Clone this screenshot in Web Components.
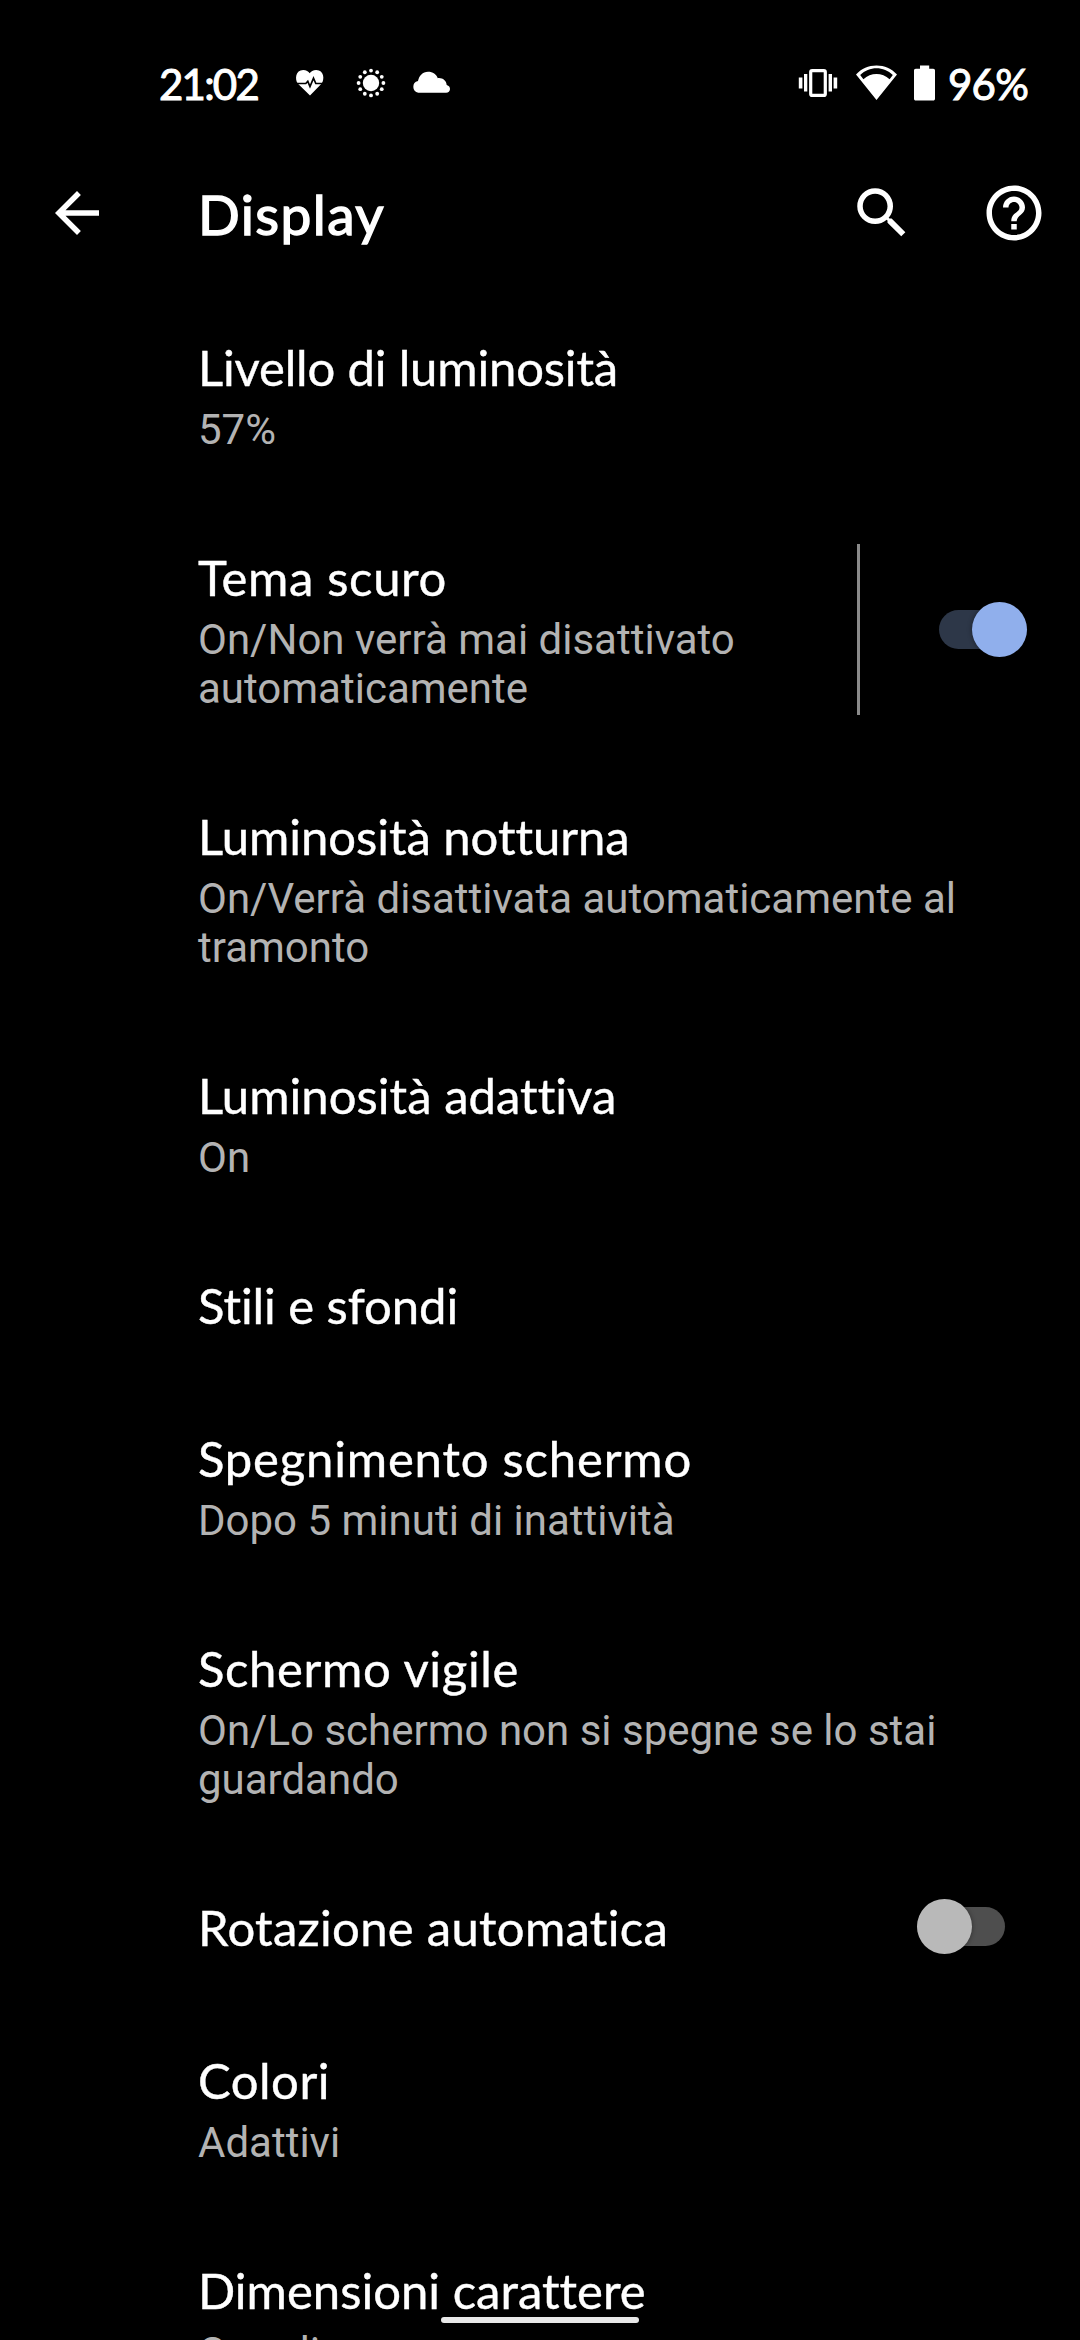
<!DOCTYPE html>
<html lang="it">
<head>
<meta charset="utf-8">
<title>Display</title>
<style>
  html, body {
    margin: 0;
    background: #000;
  }
  body {
    width: 1080px;
    height: 2340px;
    overflow: hidden;
    color: #fff;
    font-family: Lato, "Open Sans", sans-serif;
  }
</style>
</head>
<body>
<settings-screen>
  <status-bar slot="top" time="21:02" battery="96%"></status-bar>
  <app-bar slot="top">Display</app-bar>
  <pref-row summary="57%" title-width="420">Livello di luminosità</pref-row>
  <pref-row summary="On/Non verrà mai disattivato automaticamente" title-width="249">Tema scuro
    <toggle-switch slot="widget" checked divided></toggle-switch>
  </pref-row>
  <pref-row summary="On/Verrà disattivata automaticamente al tramonto" title-width="430">Luminosità notturna</pref-row>
  <pref-row summary="On" title-width="417">Luminosità adattiva</pref-row>
  <pref-row title-width="261">Stili e sfondi</pref-row>
  <pref-row summary="Dopo 5 minuti di inattività" title-width="494">Spegnimento schermo</pref-row>
  <pref-row summary="On/Lo schermo non si spegne se lo stai guardando" title-width="321">Schermo vigile</pref-row>
  <pref-row title-width="471">Rotazione automatica
    <toggle-switch slot="widget"></toggle-switch>
  </pref-row>
  <pref-row summary="Adattivi" title-width="132">Colori</pref-row>
  <pref-row summary="Grandi" title-width="446">Dimensioni carattere</pref-row>
</settings-screen>

<script>
// Spreads the letters of an inline element over the given width
function fitText(el, width) {
  if (!width) return;
  const count = el.dataset.count || 1;
  const natural = el.getBoundingClientRect().width;
  el.style.letterSpacing = `${(width - natural) / count}px`;
}

class SettingsScreen extends HTMLElement {
  constructor() {
    super();
    this.attachShadow({ mode: 'open' });
    this.shadowRoot.innerHTML = `
      <style>
        :host {
          display: flex;
          flex-direction: column;
          position: relative;
          height: 2340px;
          overflow: hidden;
        }
        main {
          display: flex;
          flex-direction: column;
        }
        .home {
          position: absolute;
          left: 441px;
          bottom: 17px;
          width: 198px;
          height: 6px;
          border-radius: 3px;
          background: #e8e8e8;
        }
      </style>
      <slot name="top"></slot>
      <main><slot></slot></main>
      <div class="home"></div>
    `;
  }
}

class StatusBar extends HTMLElement {
  constructor() {
    super();
    this.attachShadow({ mode: 'open' });
  }

  connectedCallback() {
    this.render();
    this.shadowRoot.querySelectorAll('[data-width]').forEach((el) => {
      fitText(el, Number(el.dataset.width));
    });
  }

  render() {
    // The dots round the sun
    let dots = '';
    for (let i = 0; i < 12; i++) {
      const a = i * Math.PI / 6;
      dots += `<circle cx="${18 + 12.4 * Math.cos(a)}" cy="${23 + 12.4 * Math.sin(a)}" r="1.9"/>`;
    }

    this.shadowRoot.innerHTML = `
      <style>
        :host {
          display: flex;
          flex: none;
          box-sizing: border-box;
          height: 143px;
          padding: 60px 49px 0 159px;
          justify-content: space-between;
        }
        div {
          display: flex;
        }
        svg {
          display: block;
          flex: none;
          height: 46px;
          fill: #fff;
        }
        span {
          font-size: 42px;
          line-height: 48px;
          white-space: nowrap;
          -webkit-text-stroke: 1px #fff;
        }
        .time { flex: none; width: 133px; }
        .level { flex: none; width: 83px; }
      </style>
      <div>
        <div class="time"><span data-count="5" data-width="99">${this.getAttribute('time')}</span></div>
        <svg width="36" viewBox="0 0 36 46">
          <path d="M18 35.400 5.700 23.400C2.800 19.500 3.300 10 11.200 10c3.100 0 5.200 1.400 6.500 3.300 1.300-1.900 3.400-3.300 6.500-3.300 7.900 0 8.500 9.400 5.500 13.400z"/>
          <path d="M4.500 23.500h9.300l2-2.200 2.200 5.300 3.500-8.400 2.300 5.300h8" fill="none" stroke="#000" stroke-width="1.700"/>
        </svg>
        <svg width="36" viewBox="0 0 36 46" style="margin-left: 25px">
          <circle cx="18" cy="23" r="8.200"/>${dots}
        </svg>
        <svg width="42" viewBox="0 0 42 46" style="margin-left: 21px">
          <path d="M8.300 32.700a5.900 5.900 0 0 1-.3-11.600C9.100 15.600 12.700 11.700 18 11.700c4.900 0 8.300 2.600 9.800 6.500 4.500-.6 8.600 2.300 8.900 6.900 2.300.7 3.300 2.200 3.300 3.900 0 2.200-1.700 3.700-3.900 3.700z"/>
        </svg>
      </div>
      <div>
        <svg width="40" viewBox="0 0 40 46">
          <rect x="12.700" y="10.600" width="14.600" height="24.800" rx="1.500" fill="none" stroke="#fff" stroke-width="3.200"/>
          <path d="M.8 17.500h3.600v11H.8zM6 14h3.300v17.400H6zM30.600 14h3.400v17.400h-3.400zM35.600 17.500h3.600v11h-3.600z"/>
        </svg>
        <svg width="42" viewBox="0 0 42 46" style="margin-left: 18px">
          <path fill-rule="evenodd" d="M20.500 40 0 14.500C5.500 8.400 12.500 5.400 20.500 5.400s15 3 20.500 9.100zM4.200 15l3.200 4.200c7.300-7.100 18.800-7.100 26.200 0l3.200-4.200c-9-9-23.600-9-32.600 0z"/>
        </svg>
        <svg width="22" viewBox="0 0 22 46" style="margin-left: 16px">
          <path d="M6 5.400h9.200v3.400h4c1.100 0 1.800.7 1.800 1.800v28.200c0 1.100-.7 1.800-1.800 1.800H1.800C.7 40.600 0 39.900 0 38.800V10.600C0 9.500.7 8.800 1.800 8.800H6z"/>
        </svg>
        <div class="level" style="margin-left: 12px"><span data-count="3" data-width="80">${this.getAttribute('battery')}</span></div>
      </div>
    `;
  }
}

class AppBar extends HTMLElement {
  constructor() {
    super();
    this.attachShadow({ mode: 'open' });
    this.shadowRoot.innerHTML = `
      <style>
        :host {
          display: flex;
          flex: none;
          box-sizing: border-box;
          height: 147px;
          padding: 37px 33px 0 44px;
        }
        svg {
          flex: none;
          width: 66px;
          height: 66px;
          fill: #fff;
        }
        h1 {
          flex: 1;
          margin: 0 0 0 88px;
          font-size: 55px;
          font-weight: 400;
          line-height: 69px;
          -webkit-text-stroke: 1.4px #fff;
        }
        .help { margin-left: 66px; }
      </style>
      <svg viewBox="0 0 24 24"><path d="M20 11H7.830l5.590-5.590L12 4l-8 8 8 8 1.410-1.410L7.830 13H20z"/></svg>
      <h1><span data-count="7"><slot></slot></span></h1>
      <svg viewBox="0 0 24 24"><path d="M15.500 14h-.79l-.28-.27A6.471 6.471 0 0 0 16 9.500 6.500 6.500 0 1 0 9.500 16c1.610 0 3.090-.59 4.230-1.570l.27.28v.79l5 4.990L20.490 19zm-6 0C7.010 14 5 11.990 5 9.500S7.010 5 9.500 5 14 7.010 14 9.500 11.990 14 9.500 14z"/></svg>
      <svg class="help" viewBox="0 0 24 24"><path d="M11 18h2v-2h-2zm1-16C6.480 2 2 6.480 2 12s4.480 10 10 10 10-4.480 10-10S17.520 2 12 2zm0 18c-4.410 0-8-3.590-8-8s3.590-8 8-8 8 3.590 8 8-3.590 8-8 8zm0-14c-2.210 0-4 1.790-4 4h2c0-1.100.9-2 2-2s2 .9 2 2c0 2-3 1.750-3 5h2c0-2.250 3-2.500 3-5 0-2.210-1.790-4-4-4z"/></svg>
    `;
  }

  connectedCallback() {
    fitText(this.shadowRoot.querySelector('span'), 187);
  }
}

class PrefRow extends HTMLElement {
  constructor() {
    super();
    this.attachShadow({ mode: 'open' });
  }

  connectedCallback() {
    this.render();
    fitText(this.shadowRoot.querySelector('.title span'), Number(this.getAttribute('title-width')));
  }

  render() {
    const summary = this.getAttribute('summary');
    const count = this.textContent.trim().length;

    this.shadowRoot.innerHTML = `
      <style>
        :host {
          display: flex;
          flex: none;
        }
        .text {
          flex: 1;
          padding: 47px 42px 46px 198px;
        }
        .title {
          height: 60px;
          font-size: 49px;
          line-height: 60px;
          white-space: nowrap;
          -webkit-text-stroke: 0.4px #fff;
        }
        .summary {
          margin-top: 8px;
          color: #b3b3b3;
          font-family: Roboto, sans-serif;
          font-size: 42px;
          line-height: 49px;
        }
      </style>
      <div class="text">
        <div class="title"><span data-count="${count}"><slot></slot></span></div>
        ${summary ? `<div class="summary">${summary}</div>` : ''}
      </div>
      <slot name="widget"></slot>
    `;
  }
}

class ToggleSwitch extends HTMLElement {
  constructor() {
    super();
    this.attachShadow({ mode: 'open' });
    this.shadowRoot.innerHTML = `
      <style>
        :host {
          display: flex;
          flex: none;
          align-items: center;
          padding-right: 75px;
        }
        :host([divided]) {
          margin: 44px 0;
          padding: 0 53px 0 79px;
          border-left: 3px solid #8a8a8a;
        }
        .track {
          display: flex;
          align-items: center;
          width: 88px;
          height: 39px;
          border-radius: 20px;
          background: #4e4e4e;
        }
        .thumb {
          flex: none;
          width: 55px;
          height: 55px;
          border-radius: 50%;
          background: #b9b9b9;
          box-shadow: 0 0 5px rgba(0, 0, 0, 0.4);
        }
        :host([checked]) .track {
          justify-content: flex-end;
          background: #2d3748;
        }
        :host([checked]) .thumb {
          background: #90afec;
        }
      </style>
      <div class="track"><div class="thumb"></div></div>
    `;
  }
}

customElements.define('settings-screen', SettingsScreen);
customElements.define('status-bar', StatusBar);
customElements.define('app-bar', AppBar);
customElements.define('toggle-switch', ToggleSwitch);
customElements.define('pref-row', PrefRow);
</script>
</body>
</html>
